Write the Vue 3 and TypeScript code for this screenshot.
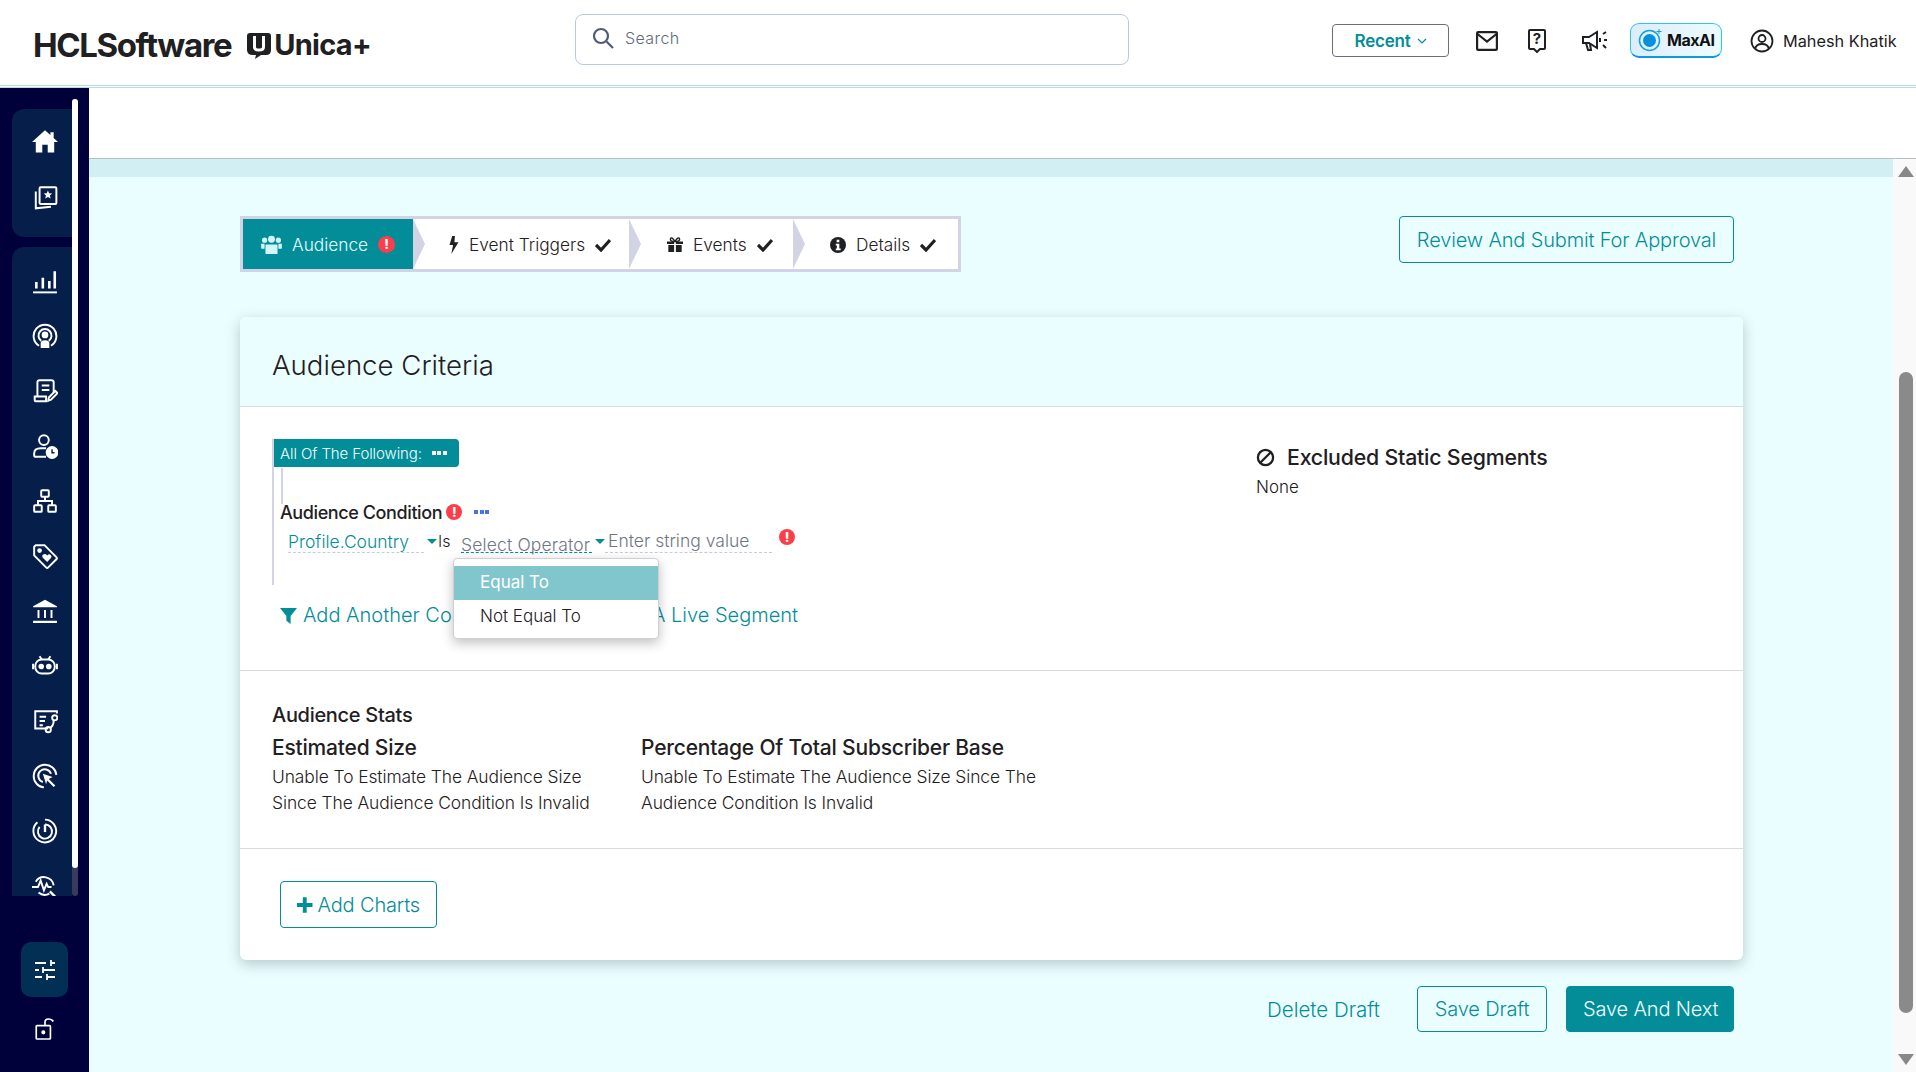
<script setup lang="ts">
// sidebar icons, drawn on a 24x24 box
const topIcons = [
  '<path fill="#fff" stroke="none" d="M12 2 0 13h3.500v9.500h6v-7h5v7h6V13H24l-4-3.700V4h-3v2.500z"/>',
  '<rect x="7" y="2" width="15.500" height="15.500" rx="1"/><path d="M3.500 6v15.500l14-1.500"/><path fill="#fff" stroke="none" d="m14.700 5 1.100 2.700 2.800.2-2.100 1.800.7 2.800-2.500-1.500-2.500 1.500.7-2.800-2.100-1.800 2.800-.2z"/>',
]
const mainIcons = [
  '<path d="M1 22.500h22"/><path stroke-width="2.400" d="M4 19v-6M10 19V9M16 19v-7M21 19V3"/>',
  '<path d="M6.500 21A10.500 10.500 0 1 1 17.500 21"/><path d="M8.500 16.500a6 6 0 1 1 7 0"/><circle cx="12" cy="11" r="2.200" fill="#fff"/><path fill="#fff" stroke="none" d="M8 23v-4q0-3 4-3t4 3v4z"/>',
  '<path d="M5 17V4q0-2 2-2h11q2 0 2 2v9"/><path d="M9 7h7M9 11h7"/><path d="M5 17H2.500v3.500q0 1 1 1H13v-4.500H5"/><path d="m15 21 .5-3 6-6 2 2-6 6z"/>',
  '<circle cx="11" cy="6.500" r="4.500"/><path d="M2 22v-3q0-5 6-5h5M2 22h11"/><circle cx="18.500" cy="18" r="5" fill="#fff"/><path stroke="#051e4a" stroke-width="1.300" d="M18.500 15v3.300h2.300"/>',
  '<rect x="8.500" y="2" width="7" height="6" rx=".8"/><rect x="2" y="16" width="7" height="6" rx=".8"/><rect x="15" y="16" width="7" height="6" rx=".8"/><path d="M12 8v4M5.500 16v-4h13v4"/>',
  '<path d="M2 3.500 3.500 2h8L22.500 13q1 1 0 2L15 22.500q-1 1-2 0L2 11.500z"/><circle cx="7" cy="7" r="1.300" fill="#fff"/><path fill="#fff" stroke="none" d="M14 17.500l-4-4q-1.300-2 .5-3t3.500 1q1.700-2 3.300-.5t0 3z"/>',
  '<path fill="#fff" stroke="none" d="M12 1.500 1 7.500v1h22v-1zM1 21h22v2H1z"/><path d="M6 11v7.500M12 11v7.500M18 11v7.500"/>',
  '<rect x="3" y="6" width="18" height="13" rx="6"/><circle cx="8.500" cy="12.500" r="1.700" fill="#fff"/><circle cx="15.500" cy="12.500" r="1.700" fill="#fff"/><path d="M1 10v5M23 10v5M7 3l2 3M17 3l-2 3"/>',
  '<path d="M15 19H3V3h20v2"/><path d="M7 8h6M7 12h5M7 16h3"/><circle cx="21" cy="9" r="2.400"/><circle cx="15" cy="20" r="2.400"/><path d="M20 11.500q0 5-3.500 7"/>',
  '<path d="M11 22.500a10.500 10.500 0 1 1 11.500-11.500"/><path d="M10 17.500a6 6 0 1 1 7.500-7.500"/><path fill="#fff" stroke="none" d="m10 10 9 3-3.500 1.700 6 6-1.500 1.500-6-6L13 19.500z"/>',
  '<path d="M12 1.500A10.500 10.500 0 1 1 5 4"/><path d="M12 6a6.500 6.500 0 1 1-5 2.300"/><path stroke-width="2.200" d="M12 6v7"/>',
  '<path d="M3.500 8A9 9 0 0 1 20 11.500"/><path d="M0 13h5.500l2.500-6 3 9 2.500-6 1.500 3h3"/><path d="M6 18a9 9 0 0 0 10 1"/><path stroke-width="2.200" d="m16.500 17 6.500 6.500"/>',
]
const dots = 3
</script>

<template>
  <div class="page">
    <header class="topbar">
      <div class="brand">
        <span class="brand-hcl">HCLSoftware</span>
        <svg class="brand-mark" viewBox="0 0 24 26" width="24" height="26">
          <path fill="#1e2022" d="M3 0h18q3 0 3 3v14q0 5-5 5h-5l-6 4 1-4H6q-6 0-6-5V3q0-3 3-3z"/>
          <path fill="none" stroke="#fff" stroke-width="3" d="M7.500 3v11q0 3 4.500 3t4.500-3V3"/>
        </svg>
        <span class="brand-unica">Unica+</span>
      </div>
      <div class="search">
        <svg viewBox="0 0 24 24" width="24" height="24" fill="none" stroke="#4d5d75" stroke-width="2.200">
          <circle cx="10" cy="10" r="7"/><path d="m15.500 15.500 6.500 6.500"/>
        </svg>
        <span>Search</span>
      </div>
      <div class="top-actions">
        <button class="recent">Recent
          <svg viewBox="0 0 10 6" width="10" height="6" fill="none" stroke="#038d99" stroke-width="1.200"><path d="m1 1 4 4 4-4"/></svg>
        </button>
        <svg class="act mail" viewBox="0 0 22 20" width="22" height="20" fill="none" stroke="#1e2022" stroke-width="2.200">
          <rect x="1.100" y="1.100" width="19.800" height="17.800" rx="1"/><path d="m1.500 3 9.500 7.500L20.500 3"/>
        </svg>
        <svg class="act help" viewBox="0 0 18 24" width="18" height="24" fill="none" stroke="#1e2022" stroke-width="2">
          <path d="M2 1h14q1 0 1 1v17q0 1-1 1h-4l-3 3-3-3H2q-1 0-1-1V2q0-1 1-1z"/>
          <text x="9" y="15" text-anchor="middle" class="q">?</text>
        </svg>
        <svg class="act horn" viewBox="0 0 26 22" width="26" height="22" fill="none" stroke="#1e2022" stroke-width="2">
          <path d="M1 7h6l8-5v16l-8-5H1z"/><path d="M4 13l2 7h3l-1-6"/><path d="M18 8v4M21 4l3-2M22 10h3M21 15l3 3"/>
        </svg>
        <div class="maxai">
          <svg viewBox="0 0 24 24" width="24" height="24">
            <circle cx="11.500" cy="12.500" r="10" fill="none" stroke="#12a3d8" stroke-width="1.500"/>
            <circle cx="11.500" cy="12.500" r="6.500" fill="#0790dc"/>
            <path d="M21 1v5M18.500 3.500h5" stroke="#12a3d8"/>
          </svg>
          <span>MaxAI</span>
        </div>
        <div class="user">
          <svg viewBox="0 0 24 24" width="24" height="24" fill="none" stroke="#1e2022" stroke-width="1.800">
            <circle cx="12" cy="12" r="10.500"/><circle cx="12" cy="9.500" r="3.500"/><path d="M5 20q1-5 7-5t7 5"/>
          </svg>
          <span>Mahesh Khatik</span>
        </div>
      </div>
    </header>

    <div class="layout">
      <aside class="sidebar">
        <div class="nav-scroll">
          <div class="nav-groups">
            <div class="nav-group first">
              <svg v-for="(icon, i) in topIcons" :key="i" class="nav-icon" viewBox="0 0 24 24" v-html="icon"></svg>
            </div>
            <div class="nav-group second">
              <svg v-for="(icon, i) in mainIcons" :key="i" class="nav-icon" viewBox="0 0 24 24" v-html="icon"></svg>
            </div>
          </div>
          <div class="nav-track"><div class="nav-thumb"></div></div>
        </div>
        <div class="nav-bottom">
          <div class="tune">
            <svg viewBox="0 0 24 24" width="24" height="24" fill="none" stroke="#fff" stroke-width="1.800">
              <path d="M2 5h11M18 5h4M18 2v6M2 12h4M10 12h12M10 9v6M2 19h7M14 19h8M14 16v6"/>
            </svg>
          </div>
          <svg class="unlock" viewBox="0 0 24 28" width="20" height="24" fill="none" stroke="#fff" stroke-width="2">
            <rect x="1.500" y="10" width="17" height="16" rx="1"/><circle cx="10" cy="18" r="1.500" fill="#fff"/><path d="M12 10V6q0-4 4-4t6 3"/>
          </svg>
        </div>
      </aside>

      <main class="main">
        <div class="white-band"></div>
        <div class="scroll-area">
          <div class="content">
            <div class="band"></div>
            <div class="inner">
              <div class="toolbar">
                <div class="stepper">
                  <div class="step active">
                    <svg viewBox="0 0 24 22" width="21" height="19" fill="#d2f6f8">
                      <circle cx="12" cy="5" r="4"/><circle cx="4" cy="6" r="3"/><circle cx="20" cy="6" r="3"/><path d="M6 11h12q1 0 1 1v9q0 1-1 1H6q-1 0-1-1v-9q0-1 1-1zM0 10h4v6H1q-1 0-1-1zM20 10h4v5q0 1-1 1h-3z"/>
                    </svg>
                    <span>Audience</span>
                    <span class="err small">!</span>
                  </div>
                  <div class="step triggers">
                    <svg viewBox="0 0 10 20" width="10" height="18" fill="#1e2022"><path d="M6 0H3L0 10h4L2 20l8-13H5.500z"/></svg>
                    <span>Event Triggers</span>
                    <svg class="tick" viewBox="0 0 16 14"><path d="m1 7 5 5 9-10"/></svg>
                  </div>
                  <div class="step events">
                    <svg viewBox="0 0 18 18" width="16" height="16" fill="#1e2022"><path d="M0 5h8v3H0zM10 5h8v3h-8zM1.500 9H8v8H1.500zM10 9h6.500v8H10z"/><path d="M9 5Q3 5 4 2t5 3q4-6 5-3t-5 3z" fill="none" stroke="#1e2022" stroke-width="1.600"/></svg>
                    <span>Events</span>
                    <svg class="tick" viewBox="0 0 16 14"><path d="m1 7 5 5 9-10"/></svg>
                  </div>
                  <div class="step details">
                    <svg viewBox="0 0 18 18" width="16" height="16"><circle cx="9" cy="9" r="9" fill="#1e2022"/><path fill="#fff" d="M7.500 3h3v3h-3zM6.500 7.500h4V13H12v2H6.500v-2h1.200V9.500H6.500z"/></svg>
                    <span>Details</span>
                    <svg class="tick" viewBox="0 0 16 14"><path d="m1 7 5 5 9-10"/></svg>
                  </div>
                </div>
                <button class="btn outline review">Review And Submit For Approval</button>
              </div>

              <section class="card">
                <h2 class="card-title">Audience Criteria</h2>
                <div class="criteria">
                  <div class="rule">
                    <div class="rule-body">
                      <div class="rule-head">
                        <span>All Of The Following:</span>
                        <span class="dots white"><i v-for="n in dots" :key="n"></i></span>
                      </div>
                      <div class="cond-title">
                        <span>Audience Condition</span>
                        <span class="err">!</span>
                        <span class="dots blue"><i v-for="n in dots" :key="n"></i></span>
                      </div>
                      <div class="cond-row">
                        <span class="field attr">Profile.Country</span>
                        <span class="caret"></span>
                        <span class="is">Is</span>
                        <span class="field op">Select Operator</span>
                        <span class="caret"></span>
                        <span class="field val">Enter string value</span>
                        <span class="err">!</span>
                        <div class="menu">
                          <div class="menu-item on">Equal To</div>
                          <div class="menu-item">Not Equal To</div>
                        </div>
                      </div>
                    </div>
                    <div class="links">
                      <svg viewBox="0 0 16 16" width="17" height="17" fill="#038d99"><path d="M0 1h16L10 8.500V16l-4-3V8.500z"/></svg>
                      <span>Add Another Condition</span>
                      <span class="link-b">Add A Live Segment</span>
                    </div>
                  </div>
                  <div class="excluded">
                    <h3>
                      <svg viewBox="0 0 20 20" width="19" height="19" fill="none" stroke="#1e2022" stroke-width="2.400"><circle cx="10" cy="10" r="8"/><path d="m4.500 15.500 11-11"/></svg>
                      Excluded Static Segments
                    </h3>
                    <p>None</p>
                  </div>
                </div>
                <div class="stats">
                  <h4>Audience Stats</h4>
                  <div class="stat-cols">
                    <div class="stat one">
                      <h5>Estimated Size</h5>
                      <p>Unable To Estimate The Audience Size Since The Audience Condition Is Invalid</p>
                    </div>
                    <div class="stat two">
                      <h5>Percentage Of Total Subscriber Base</h5>
                      <p>Unable To Estimate The Audience Size Since The Audience Condition Is Invalid</p>
                    </div>
                  </div>
                </div>
                <div class="charts">
                  <button class="btn outline add">
                    <svg viewBox="0 0 16 16" width="16" height="16" fill="#038d99"><path d="M6 0h4v6h6v4h-6v6H6v-6H0V6h6z"/></svg>
                    Add Charts
                  </button>
                </div>
              </section>

              <div class="footer-actions">
                <span class="delete">Delete Draft</span>
                <button class="btn outline draft">Save Draft</button>
                <button class="btn solid next">Save And Next</button>
              </div>
            </div>
          </div>
          <div class="scrollbar">
            <span class="arrow up"></span>
            <div class="thumb"></div>
            <span class="arrow down"></span>
          </div>
        </div>
      </main>
    </div>
  </div>
</template>

<style>
html, body { margin: 0; overflow: hidden; }
</style>

<style scoped>
* { box-sizing: border-box; }

.page {
  width: 1916px;
  height: 1072px;
  display: flex;
  flex-direction: column;
  font-family: Inter, "Liberation Sans", sans-serif;
  color: #1e2022;
  background: #fff;
  overflow: hidden;
}

.topbar {
  height: 88px;
  flex: none;
  display: flex;
  align-items: center;
  padding: 0 0 6px 33px;
  border-bottom: 3px double #b9dcdc;
}

.brand { width: 542px; margin-top: 10px; display: flex; align-items: center; }
.brand-hcl { font-size: 33px; font-weight: 700; letter-spacing: -1.4px; }
.brand-mark { margin: 2px 3px 0 16px; }
.brand-unica { font-size: 29px; font-weight: 700; letter-spacing: -.7px; }

.search {
  width: 554px;
  height: 51px;
  display: flex;
  align-items: center;
  gap: 10px;
  padding: 0 0 3px 15px;
  border: 1px solid #b7cbe0;
  border-radius: 8px;
  font-size: 16px;
  font-weight: 300;
  letter-spacing: .4px;
  color: #5d6a7a;
}

.top-actions { flex: 1; margin-top: 2px; display: flex; align-items: center; }

.recent {
  margin-left: 203px;
  width: 117px;
  height: 33px;
  display: flex;
  align-items: center;
  justify-content: center;
  gap: 6px;
  background: #fff;
  border: 1px solid #6e6c85;
  border-radius: 4px;
  color: #038d99;
  font: 600 17px Inter, sans-serif;
  letter-spacing: -.2px;
}

.act { flex: none; }
.mail { margin-left: 27px; }
.help { margin-left: 30px; }
.q { font: 700 15px Inter, sans-serif; fill: #1e2022; stroke: none; }
.horn { margin-left: 36px; }

.maxai {
  margin-left: 22px;
  width: 92px;
  height: 35px;
  display: flex;
  align-items: center;
  gap: 5px;
  padding-left: 7px;
  border: 1px solid #29c9e6;
  border-bottom: 2px solid #0e97e8;
  border-radius: 9px;
  background: linear-gradient(100deg, #dcecfd, #eefcff);
  font-size: 16px;
  font-weight: 700;
  letter-spacing: -.5px;
  color: #111;
}

.user {
  margin-left: 28px;
  display: flex;
  align-items: center;
  gap: 9px;
  font-size: 16.300px;
  white-space: nowrap;
}

.layout { flex: 1; display: flex; min-height: 0; }

.sidebar {
  width: 89px;
  flex: none;
  display: flex;
  flex-direction: column;
  background: #00003a;
}

.nav-scroll {
  height: 808px;
  flex: none;
  display: flex;
  align-items: stretch;
  padding: 11px 0 0 12px;
}

.nav-groups { width: 60px; padding-top: 10px; overflow: hidden; }

.nav-group {
  display: flex;
  flex-direction: column;
  align-items: center;
  background: #051e4a;
  border-radius: 12px 0 0 12px;
}

.nav-group.first { height: 128px; padding: 19px 0 0 6px; gap: 31px; }
.nav-group.second { margin-top: 10px; padding: 21px 0 0 6px; gap: 29px; border-radius: 12px 0 0 0; height: 760px; }
.nav-icon {
  width: 26px;
  height: 26px;
  flex: none;
  fill: none;
  stroke: #fff;
  stroke-width: 1.800;
}

.nav-track { width: 6px; border-radius: 3px; background: #3a3a5c; }
.nav-thumb { height: 769px; background: #fff; border-radius: 3px; }

.nav-bottom { display: flex; flex-direction: column; align-items: center; padding: 46px 0 0; }
.tune {
  width: 47px;
  height: 55px;
  display: flex;
  align-items: center;
  justify-content: center;
  border-radius: 10px;
  background: #023054;
}
.unlock { margin-top: 20px; }

.main { flex: 1; min-width: 0; display: flex; flex-direction: column; }
.white-band { height: 71px; flex: none; border-bottom: 1px solid #b8bfc4; }
.scroll-area { flex: 1; display: flex; min-height: 0; background: #ebfeff; }
.content { flex: 1; min-width: 0; }
.band { height: 18px; background: #d2f0f4; }
.inner { padding: 39px 150px 0 151px; }

.toolbar { display: flex; justify-content: space-between; align-items: flex-start; padding-right: 9px; }

.stepper {
  width: 721px;
  height: 56px;
  display: flex;
  border: 3px solid #d3d3e6;
  background: #fff;
}

.step {
  position: relative;
  height: 100%;
  display: flex;
  align-items: center;
  font-size: 17.300px;
  font-weight: 300;
  padding-top: 1px;
}
.step.active { width: 170px; padding-left: 18px; gap: 10px; background: #038d99; color: #e6feff; }
.step.triggers { width: 216px; padding-left: 36px; gap: 10px; }
.step.events { width: 164px; padding-left: 38px; gap: 10px; }
.step.details { flex: 1; padding-left: 37px; gap: 10px; }

.step:not(.details)::after {
  content: "";
  position: absolute;
  top: 0;
  right: -12px;
  width: 12px;
  height: 100%;
  background: #d3d3e6;
  clip-path: polygon(0 0, 100% 50%, 0 100%);
  z-index: 1;
}

.tick { width: 16px; height: 14px; fill: none; stroke: #1e2022; stroke-width: 3.200; }

.err {
  width: 17px;
  height: 17px;
  flex: none;
  display: inline-flex;
  align-items: center;
  justify-content: center;
  border-radius: 50%;
  background: #fb3f4a;
  color: #fff;
  font-size: 13px;
  font-weight: 800;
  line-height: 1;
}

.btn {
  height: 46px;
  padding: 0 16px;
  border-radius: 4px;
  font: 300 20px Inter, sans-serif;
  letter-spacing: -.15px;
  white-space: nowrap;
}
.btn.outline { background: transparent; border: 1px solid #038d99; color: #038d99; }
.btn.solid { background: #038d99; border: 1px solid #038d99; color: #effeff; }
.review { width: 335px; height: 47px; }
.draft { width: 130px; }
.next { width: 168px; }

.card {
  margin-top: 45px;
  height: 643px;
  background: #fff;
  border-radius: 6px;
  box-shadow: 0 4px 14px rgba(40, 60, 70, .28);
}

.card-title {
  margin: 0;
  height: 90px;
  display: flex;
  align-items: center;
  padding: 6px 0 0 32px;
  font-size: 27.600px;
  font-weight: 300;
  background: #ebfeff;
  border-bottom: 1px solid #d6dcdc;
  border-radius: 6px 6px 0 0;
}

.criteria {
  height: 264px;
  display: flex;
  padding: 32px 0 0 32px;
  border-bottom: 1px solid #d6dcdc;
}

.rule { width: 984px; flex: none; }

.rule-body {
  position: relative;
  height: 146px;
  border-left: 2px solid #d3d3e6;
}
.rule-body::before {
  content: "";
  position: absolute;
  left: 7px;
  top: 29px;
  width: 2px;
  height: 36px;
  background: #d3d3e6;
}

.rule-head {
  width: 185px;
  height: 28px;
  display: flex;
  align-items: center;
  gap: 10px;
  padding-left: 6px;
  background: #038d99;
  border-radius: 0 4px 4px 0;
  color: #effeff;
  font-size: 15px;
  font-weight: 300;
  letter-spacing: -.1px;
}

.dots { display: inline-flex; gap: 1.500px; }
.dots i { width: 4px; height: 4px; }
.dots.white i { background: #fff; }
.dots.blue i { background: #4a72e8; }

.cond-title {
  height: 59px;
  padding: 31px 0 0 6px;
  display: flex;
  align-items: center;
  gap: 4px;
  font-size: 18px;
  font-weight: 500;
  letter-spacing: -.4px;
}
.cond-title .err { width: 16px; height: 16px; }
.cond-title .dots { margin-left: 8px; }

.cond-row {
  position: relative;
  display: flex;
  align-items: flex-start;
  padding-left: 14px;
  font-size: 17.500px;
  font-weight: 300;
}

.field {
  height: 27px;
  line-height: 31px;
  border-bottom: 1px dashed #c9c9de;
  color: #6f7686;
  white-space: nowrap;
}
.field.attr { width: 136px; color: #038d99; }
.field.op { width: 131px; border-bottom-color: #038d99; line-height: 38px; letter-spacing: .15px; }
.field.val { width: 167px; padding-left: 3px; line-height: 30px; }

.is { width: 24px; line-height: 30px; font-size: 16px; padding-left: 1px; }
.caret {
  width: 0;
  height: 0;
  margin: 13px 0 0 3px;
  border-left: 5px solid transparent;
  border-right: 5px solid transparent;
  border-top: 5px solid #038d99;
}
.cond-row .err { margin: 3px 0 0 7px; width: 16px; height: 16px; }

.menu {
  position: absolute;
  left: 179px;
  top: 32px;
  width: 206px;
  height: 81px;
  padding: 7px 0;
  background: #fff;
  border: 1px solid #d0d0d0;
  border-radius: 4px;
  box-shadow: 0 4px 12px rgba(0, 0, 0, .25);
  z-index: 5;
}
.menu-item { height: 33.500px; padding-left: 26px; line-height: 33px; font-size: 17px; font-weight: 300; }
.menu-item.on { background: #82c6cd; color: #fff; font-weight: 400; }

.links {
  width: 526px;
  margin-top: 18px;
  display: flex;
  align-items: center;
  gap: 6px;
  padding-left: 8px;
  color: #038d99;
  font-size: 20px;
  font-weight: 300;
  white-space: nowrap;
}
.link-b { margin-left: auto; }

.excluded { padding-top: 5px; }
.excluded h3 {
  margin: 0;
  display: flex;
  align-items: center;
  gap: 12px;
  font-size: 21.300px;
  font-weight: 500;
  letter-spacing: -.2px;
  white-space: nowrap;
}
.excluded p { margin: 7px 0 0; font-size: 17px; font-weight: 300; }

.stats {
  height: 178px;
  padding: 32px 0 0 32px;
  border-bottom: 1px solid #d6dcdc;
}
.stats h4 { margin: 0; font-size: 20px; font-weight: 500; letter-spacing: -.3px; }
.stat-cols { display: flex; margin-top: 8px; }
.stat.one { width: 369px; }
.stat.two { width: 430px; }
.stat h5 { margin: 0 0 4px; font-size: 21px; font-weight: 500; letter-spacing: -.2px; }
.stat p { margin: 0; font-size: 17.400px; font-weight: 300; line-height: 26px; max-width: 335px; letter-spacing: -.08px; }
.stat.two p { max-width: 420px; }

.charts { padding: 32px 0 0 40px; }
.btn.add { width: 157px; height: 47px; display: flex; align-items: center; gap: 5px; }

.footer-actions {
  margin-top: 26px;
  padding-right: 9px;
  display: flex;
  justify-content: flex-end;
  align-items: center;
  gap: 19px;
}
.delete { margin-right: 18px; color: #038d99; font-size: 20.500px; font-weight: 300; }

.scrollbar {
  width: 23px;
  flex: none;
  display: flex;
  flex-direction: column;
  align-items: center;
  padding-left: 3px;
  background: #f9f9f9;
}
.arrow { width: 0; height: 0; border-left: 8px solid transparent; border-right: 8px solid transparent; }
.arrow.up { margin-top: 7px; border-bottom: 11px solid #888; }
.arrow.down { margin-top: 41px; border-top: 11px solid #888; }
.thumb { width: 14px; height: 641px; margin-top: 195px; background: #8a8a8a; border-radius: 7px; }
</style>
